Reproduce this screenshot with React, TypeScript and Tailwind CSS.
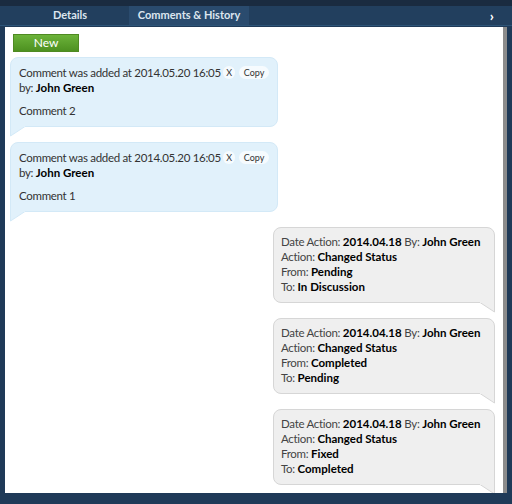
import React from "react";

type Comment = { date: string; author: string; text: string };
type Change = { date: string; by: string; action: string; from: string; to: string };

const COMMENTS: Comment[] = [
  { date: "2014.05.20 16:05", author: "John Green", text: "Comment 2" },
  { date: "2014.05.20 16:05", author: "John Green", text: "Comment 1" },
];

const HISTORY: Change[] = [
  { date: "2014.04.18", by: "John Green", action: "Changed Status", from: "Pending", to: "In Discussion" },
  { date: "2014.04.18", by: "John Green", action: "Changed Status", from: "Completed", to: "Pending" },
  { date: "2014.04.18", by: "John Green", action: "Changed Status", from: "Fixed", to: "Completed" },
];

function CommentBubble({ c }: { c: Comment }) {
  return (
    <div className="relative w-[268px] mb-[15px]">
      <div className="rounded-[8px] rounded-bl-none border border-[#d3e9f7] bg-[#e1f1fb] pl-[8px] pr-2 pt-[7px] pb-[8px] text-[11.5px] leading-[15px] tracking-[-0.3px] text-[#333]">
        <div className="flex items-center whitespace-nowrap">
          <span>Comment was added at {c.date}</span>
          <span className="ml-[2px] h-[13px] w-[13px] flex items-center justify-center rounded-full bg-[#f6fbfe] text-[9px] tracking-normal text-[#333]">X</span>
          <span className="ml-[4px] h-[13px] w-[31px] flex items-center justify-center rounded-full bg-[#f6fbfe] text-[9px] tracking-normal text-[#333]">Copy</span>
        </div>
        <div>
          by: <b className="text-black tracking-normal">{c.author}</b>
        </div>
        <div className="mt-[8px]">{c.text}</div>
      </div>
      <svg className="absolute left-0 top-full -mt-px" width="16" height="11" viewBox="0 0 16 11">
        <path d="M0.5 0 L0.5 10 L15 0.5" fill="#e1f1fb" stroke="#d3e9f7" />
        <rect x="1" y="0" width="14" height="1" fill="#e1f1fb" />
      </svg>
    </div>
  );
}

function HistoryBubble({ h }: { h: Change }) {
  return (
    <div className="relative ml-auto w-[222px] mb-[15px]">
      <div className="rounded-[8px] rounded-br-none border border-[#d6d6d6] bg-[#efefef] pl-[7px] pr-1 pt-[6px] pb-[8px] text-[11.5px] leading-[15px] tracking-[-0.3px] text-[#444]">
        <div className="whitespace-nowrap">
          Date Action: <b className="text-black tracking-normal">{h.date}</b> By:{" "}
          <b className="text-black tracking-normal">{h.by}</b>
        </div>
        <div>
          Action: <b className="text-black tracking-normal">{h.action}</b>
        </div>
        <div>
          From: <b className="text-black tracking-normal">{h.from}</b>
        </div>
        <div>
          To: <b className="text-black tracking-normal">{h.to}</b>
        </div>
      </div>
      <svg className="absolute right-0 top-full -mt-px" width="16" height="11" viewBox="0 0 16 11">
        <path d="M15.5 0 L15.5 10 L1 0.5" fill="#efefef" stroke="#d6d6d6" />
        <rect x="1" y="0" width="14" height="1" fill="#efefef" />
      </svg>
    </div>
  );
}

export default function App() {
  return (
    <div
      className="w-[512px] h-[504px] bg-[#1f3a58] flex flex-col overflow-hidden"
      style={{ fontFamily: "Lato, 'Liberation Sans', sans-serif" }}
    >
      <div className="h-[6px] bg-[#1a2b40]" />
      <div className="h-[20px] bg-[#223f5e] border-b border-[#2d5478] flex items-stretch pl-[5px] pr-[18px] text-[11px] font-bold text-[#dde6ef]">
        <div className="w-[124px] flex items-center justify-center pl-[6px]">Details</div>
        <div className="w-[120px] flex items-center justify-center bg-[#2a4b6e]">Comments &amp; History</div>
        <div className="flex-1" />
        <div className="flex items-center text-white text-[14px] font-black">›</div>
      </div>
      <div className="h-[1px]" />
      <div className="flex ml-[5px] mr-[5px] h-[466px]">
        <div className="flex-1 flex flex-col bg-white pl-[5px] pr-[8px] pt-[7px] overflow-hidden">
          <button className="self-start ml-[3px] mb-[5px] h-[18px] w-[66px] border border-[#4f8a22] bg-gradient-to-b from-[#6cb33a] to-[#4d9120] text-[12px] leading-[16px] text-white">
            New
          </button>
          {COMMENTS.map((c, i) => (
            <CommentBubble key={i} c={c} />
          ))}
          {HISTORY.map((h, i) => (
            <HistoryBubble key={i} h={h} />
          ))}
        </div>
        <div className="w-[4px] bg-[#8c8c8c]" />
      </div>
    </div>
  );
}
